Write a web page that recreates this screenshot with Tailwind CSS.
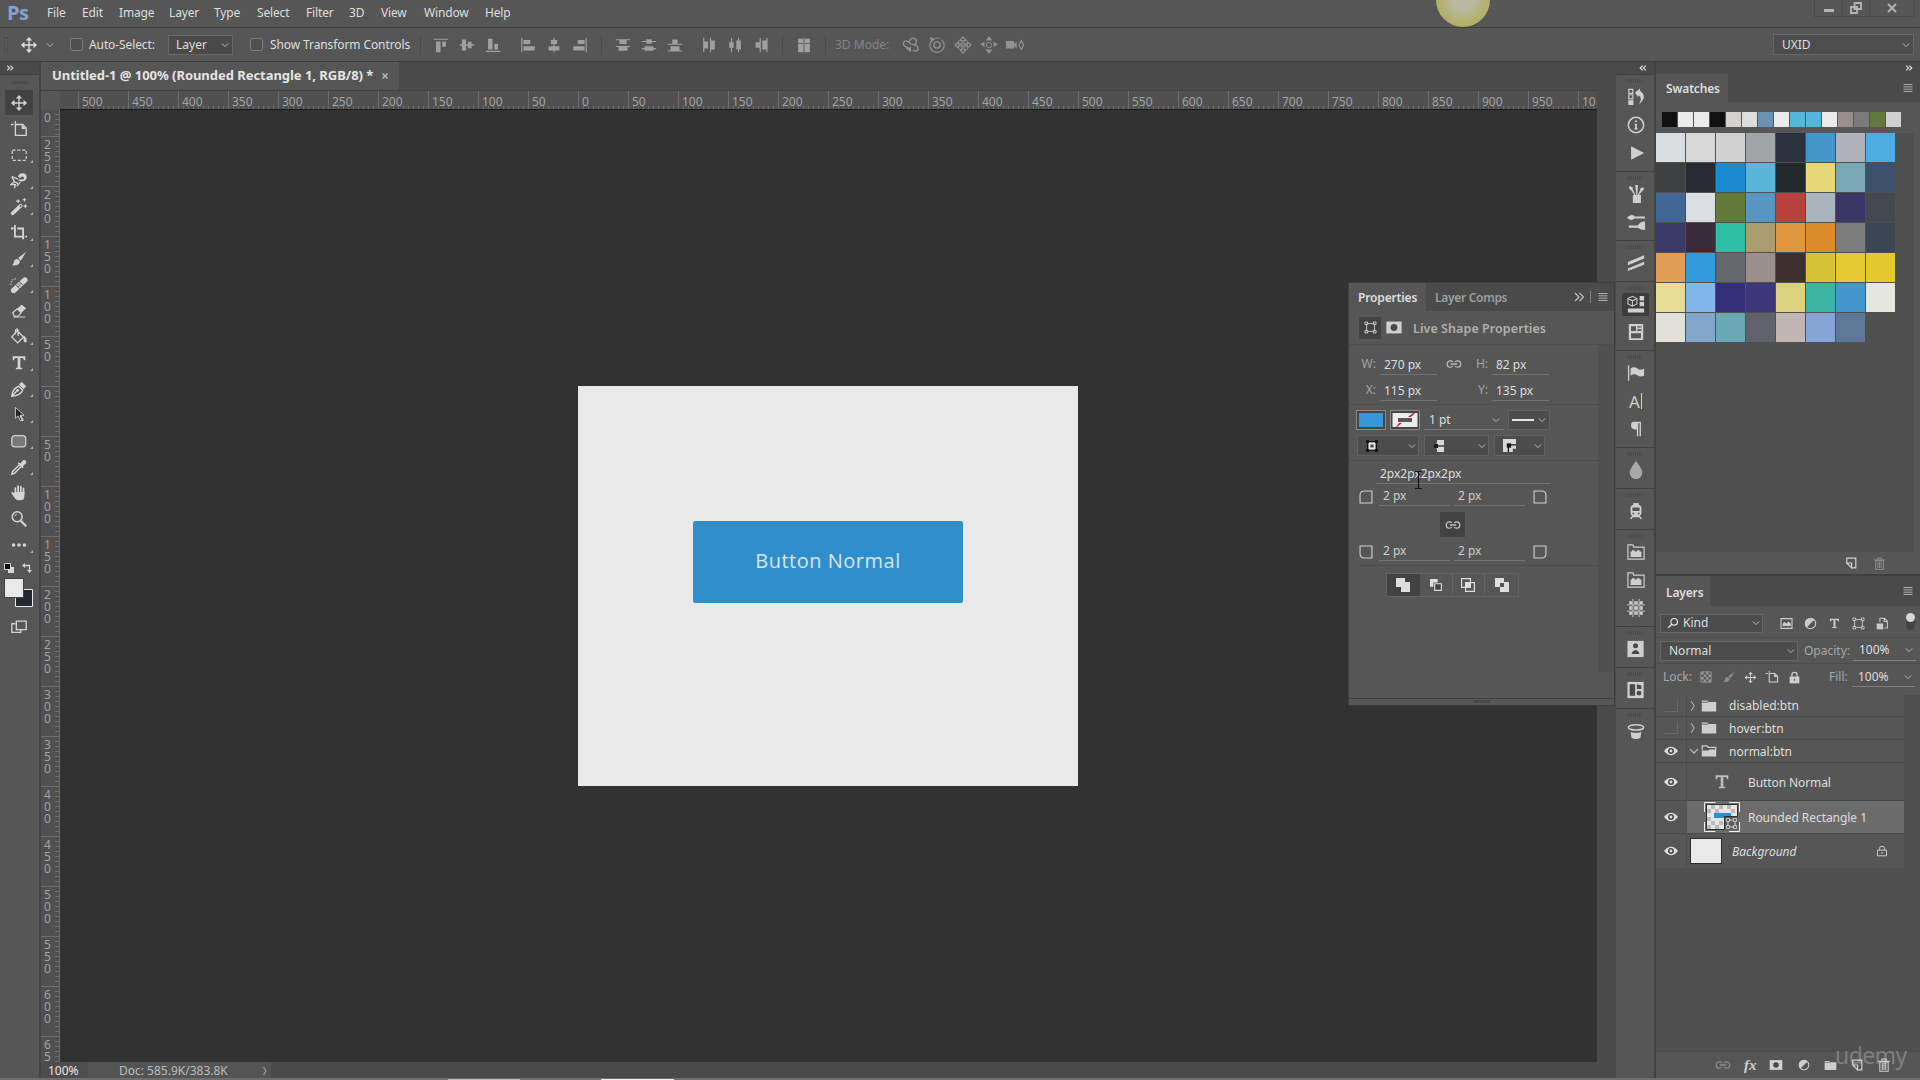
<!DOCTYPE html>
<html lang="en">
  <head>
    <meta charset="utf-8" />
    <meta content="width=device-width, initial-scale=1.0" name="viewport" />
    <title>Untitled-1 @ 100%</title>
    <script src="https://cdn.jsdelivr.net/npm/@tailwindcss/browser@4"></script>
  </head>
  <body class="bg-[#565656] font-['Noto_Sans','Open_Sans',sans-serif] text-xs text-[#dedede]">
    <!-- icon set, 20x20 grid -->
    <svg class="hidden">
      <symbol id="move" viewBox="0 0 20 20"><path d="M10 4v12M4 10h12" stroke="currentColor" stroke-width="1.5"/><path d="M10 1l3.500 4h-7zM10 19l3.500-4h-7zM1 10l4-3.500v7zM19 10l-4-3.500v7z" fill="currentColor"/></symbol>
      <symbol id="artboard" viewBox="0 0 20 20"><path d="M6 1v3M1 5h3M6 5h8l4 4v8H6z" fill="none" stroke="currentColor" stroke-width="1.500"/><path d="M13 5v5h5z" fill="currentColor"/></symbol>
      <symbol id="marquee" viewBox="0 0 20 20"><path d="M2.500 4.500h15.500v11.500H2.500z" fill="none" stroke="currentColor" stroke-width="1.300" stroke-dasharray="3.500 2"/></symbol>
      <symbol id="lasso" viewBox="0 0 20 20"><path d="M2 5l7 3M2 5l3 6-4 3 5 0-1 4M5 11l4 2" fill="none" stroke="currentColor" stroke-width="1.500"/><path d="M9 5q1-4 6-3.500 4 1 3.500 5T12 10.500L9 9.500l2-1.500q4 1 4.500-1T13 5l-2 2zM12 11q-1 3-4 5l-1-1q3-2 3.500-4z" fill="currentColor"/></symbol>
      <symbol id="wand" viewBox="0 0 20 20"><path d="M3 17L12 8.500" stroke="currentColor" stroke-width="4" stroke-linecap="round"/><path d="M11 9.500l1.500-1.500" stroke="#565656" stroke-width="1.500"/><path d="M9 1.500v4M7 3.500h4M16 0v4M14 2h4M17 7v4M15 9h4" stroke="currentColor" stroke-width="1.200"/></symbol>
      <symbol id="crop" viewBox="0 0 20 20"><path d="M5.500 1v13H16M1 5h3M8 5h6.500v12M17 14h2" fill="none" stroke="currentColor" stroke-width="2"/></symbol>
      <symbol id="brush" viewBox="0 0 20 20"><path d="M18 2l-9 7 3 3zM8 10q3 1 3 3.500Q9 18 2 17q2-1 2.500-4T8 10z" fill="currentColor"/></symbol>
      <symbol id="heal" viewBox="0 0 20 20"><path d="M1 10q0-7 7-7" stroke="currentColor" stroke-width="1.300" stroke-dasharray="1.300 1.500" fill="none"/><path d="M4 16L16.500 4.500" stroke="currentColor" stroke-width="6" stroke-linecap="round"/><path d="M6 9.500l5.500 5.500M10 5.500l5 5.500" stroke="#565656"/><path d="M9 9h.1M11 9h.1M9 11.500h.1M11 11h.1" stroke="#565656" stroke-width="1.400" stroke-linecap="round"/></symbol>
      <symbol id="eraser" viewBox="0 0 20 20"><path d="M3 12l5-4.500 4.500 4.500-4 4H5z" fill="none" stroke="currentColor" stroke-width="1.300"/><path d="M8 7.500L13 3l5 4-5.500 5zM4 16h13v1.200H4z" fill="currentColor"/></symbol>
      <symbol id="bucket" viewBox="0 0 20 20"><path d="M8 3l7 7-6.500 6.500L2 10zM6 7V2.500q2-3 3 0V9" fill="none" stroke="currentColor" stroke-width="1.400"/><path d="M15 8q5 4 3 8-3 0-3-3z" fill="currentColor"/></symbol>
      <symbol id="type" viewBox="0 0 20 20"><path d="M3 2.500h14v4.500h-1.500q-.2-2.500-2-2.500h-2v10q0 1 2 1V17h-7v-1.500q2 0 2-1v-10h-2Q4.700 4.500 4.500 7H3z" fill="currentColor"/></symbol>
      <symbol id="pen" viewBox="0 0 20 20"><path d="M2 18q1-9 8-11l4 4q-2 6-12 7zM2.500 17.500L8 12" fill="none" stroke="currentColor" stroke-width="1.600"/><circle cx="8.500" cy="11.500" r="1.500" fill="currentColor"/><path d="M10 5l3-3 5 5-3 3z" fill="currentColor"/></symbol>
      <symbol id="select" viewBox="0 0 20 20"><path d="M6 1.500v12l3-2.500 2.500 5.500 2.500-1.200-2.500-5h4z" fill="#222" stroke="currentColor"/><path d="M11.500 10.500l3 6" stroke="currentColor" stroke-width="2"/></symbol>
      <symbol id="rrect" viewBox="0 0 20 20"><rect x="2" y="4" width="15.500" height="12.500" rx="3.500" fill="#787878" stroke="currentColor" stroke-width="1.400"/></symbol>
      <symbol id="dropper" viewBox="0 0 20 20"><path d="M11 7l-8 8-1 3 3-1 8-8" fill="none" stroke="currentColor" stroke-width="1.600"/><path d="M8.500 6l5.500 5.500 1.300-1.300-1-1L18 5.500q.5-3-3-3.500l-3.500 4-1.700-1.300z" fill="currentColor"/></symbol>
      <symbol id="hand" viewBox="0 0 20 20"><path d="M6 11V4.500M9 10V2.500M12 10V3M15 11V5M7 13l-4.500-3" stroke="currentColor" stroke-width="2" stroke-linecap="round"/><path d="M5 9h11v4q0 5-4 5H9q-3 0-7-7.500l3 1z" fill="currentColor"/></symbol>
      <symbol id="zoom" viewBox="0 0 20 20"><circle cx="8" cy="7.500" r="5.500" fill="none" stroke="currentColor" stroke-width="1.700"/><path d="M12 12l6 6" stroke="currentColor" stroke-width="2.400"/><path d="M5 7q.5-2.500 3-2.500" stroke="currentColor" fill="none"/></symbol>
      <symbol id="dots" viewBox="0 0 20 20"><g fill="currentColor"><circle cx="4" cy="10" r="2"/><circle cx="10" cy="10" r="2"/><circle cx="16" cy="10" r="2"/></g></symbol>
      <symbol id="screen" viewBox="0 0 20 20"><path d="M6 7.500H2V17h10v-3" fill="none" stroke="currentColor" stroke-width="1.500"/><path d="M7 4.500h11V14H7z" fill="#565656" stroke="currentColor" stroke-width="1.500"/></symbol>
      <symbol id="chev" viewBox="0 0 20 20"><path d="M2 6l8 8 8-8" fill="none" stroke="currentColor" stroke-width="2.500"/></symbol>
      <symbol id="chevr" viewBox="0 0 20 20"><path d="M7 2l5 8-5 8" fill="none" stroke="currentColor" stroke-width="1.700"/></symbol>
      <symbol id="burger" viewBox="0 0 20 20"><path d="M1 3h18M1 7.700h18M1 12.400h18M1 17h18" stroke="currentColor" stroke-width="2"/></symbol>
      <symbol id="dblr" viewBox="0 0 20 20"><path d="M3 4l6 6-6 6M11 4l6 6-6 6" fill="none" stroke="currentColor" stroke-width="3"/></symbol>
      <symbol id="dbll" viewBox="0 0 20 20"><path d="M9 4l-6 6 6 6M17 4l-6 6 6 6" fill="none" stroke="currentColor" stroke-width="3"/></symbol>
      <symbol id="atop" viewBox="0 0 20 20"><path d="M2 3h16v1.300H2zM4.500 6h5v12h-5zM11.500 6h4v6h-4z" fill="currentColor"/></symbol>
      <symbol id="amid" viewBox="0 0 20 20"><path d="M2 9.300h16v1.500H2zM4.500 4h4.500v12H4.500zM11 6.500h4v7h-4z" fill="currentColor"/></symbol>
      <symbol id="abot" viewBox="0 0 20 20"><path d="M2 16.500h16v1.300H2zM4.500 3h5v12h-5zM11.500 8.500h4v6.500h-4z" fill="currentColor"/></symbol>
      <symbol id="aleft" viewBox="0 0 20 20"><path d="M2.500 2h1.300v16H2.500zM5 4.500h7.500v4.500H5zM5 11.500h12.500V16H5z" fill="currentColor"/></symbol>
      <symbol id="acen" viewBox="0 0 20 20"><path d="M9.300 2h1.400v16H9.300zM6.500 4.500h7v4.500h-7zM4 11.500h12V16H4z" fill="currentColor"/></symbol>
      <symbol id="aright" viewBox="0 0 20 20"><path d="M16.200 2h1.300v16h-1.300zM7.500 4.500H15v4.500H7.500zM2.500 11.500H15V16H2.500z" fill="currentColor"/></symbol>
      <symbol id="dtop" viewBox="0 0 20 20"><path d="M2 3.500h16v1.300H2zM6 4.800h8V9H6zM2 11h16v1.300H2zM5 12h10v4.500H5z" fill="currentColor"/></symbol>
      <symbol id="dmid" viewBox="0 0 20 20"><path d="M2 5.500h16v1.300H2zM7 3.500h6v5H7zM2 13.300h16v1.300H2zM5 11.500h10v5H5z" fill="currentColor"/></symbol>
      <symbol id="dbot" viewBox="0 0 20 20"><path d="M2 8.500h16v1.300H2zM7 4h6v5H7zM2 16h16v1.300H2zM5 11.500h10v5H5z" fill="currentColor"/></symbol>
      <symbol id="autoal" viewBox="0 0 20 20"><path d="M3.500 3h5.500v5H3.500zM3.500 9h5.500v9H3.500zM11 3h5.500v5H11zM11 9h5.500v9H11zM9.500 2h1v16h-1z" fill="currentColor"/></symbol>
      <symbol id="orbit" viewBox="0 0 20 20"><path d="M7 13q-7-2-5-6t8 2q8 1 8 5t-6 2M8 6q2-5 6-3t0 7" fill="none" stroke="currentColor" stroke-width="1.500"/><path d="M4 14l6-2v6z" fill="currentColor"/></symbol>
      <symbol id="roll" viewBox="0 0 20 20"><circle cx="10" cy="10" r="3.500" fill="none" stroke="currentColor" stroke-width="1.500"/><path d="M5 4a8 8 0 1 0 10 0M8 2.500h5" fill="none" stroke="currentColor" stroke-width="1.300"/><path d="M2 1l6 2-4 4z" fill="currentColor"/></symbol>
      <symbol id="pan3" viewBox="0 0 20 20"><path d="M9 9V5H6.500L10 1l3.500 4H11v4h4V6.500L19 10l-4 3.500V11h-4v4h2.500L10 19l-3.500-4H9v-4H5v2.500L1 10l4-3.500V9z" fill="none" stroke="currentColor" stroke-width="1.300"/></symbol>
      <symbol id="slide3" viewBox="0 0 20 20"><circle cx="10" cy="10" r="3" fill="none" stroke="currentColor"/><path d="M10 0l3.500 5h-7zM10 20l4-5H6zM0 9l5-2.500v6zM20 9l-5-2.500v6z" fill="currentColor"/></symbol>
      <symbol id="cam3" viewBox="0 0 20 20"><path d="M0 5.500h9V9l3-3v8l-3-3v3H0z" fill="currentColor"/><path d="M17 5l2.500 5-2.500 5-2.500-5z" fill="none" stroke="currentColor" stroke-width="1.300"/></symbol>
      <symbol id="history" viewBox="0 0 20 20"><path d="M2 1.500h4.500v4.500H2zM2 7.500h4.500V12H2z" fill="none" stroke="currentColor" stroke-width="1.300"/><path d="M1.400 13.500h5.800v5.500H1.400zM9 5l5.500-4.500V3q9 7-1 15 4-7-.5-10l-1 2z" fill="currentColor"/></symbol>
      <symbol id="info" viewBox="0 0 20 20"><circle cx="10" cy="10" r="8.500" fill="none" stroke="currentColor" stroke-width="1.700"/><path d="M9 5h2v2H9zM8 8.500h3V14h1v1H8v-1h1V9.500H8z" fill="currentColor"/></symbol>
      <symbol id="play" viewBox="0 0 20 20"><path d="M4.500 2.500L19 10 4.500 17.500z" fill="currentColor"/></symbol>
      <symbol id="brushes" viewBox="0 0 20 20"><path d="M6.500 11h9v9h-9zM2.500 1.500q4.500 0 4 3.500l3 6H8L5 6Q1.500 5 2.500 1.500zM9 0h3v4l-.5 7h-1L9.500 4zM19 3q-4.500-1-4.500 3L12 11h1.500l3-4q2.500-1 2.500-4z" fill="currentColor"/></symbol>
      <symbol id="bset" viewBox="0 0 20 20"><path d="M0 5q5-5 8.500-1.200H20v2.400H8.500Q4 10 0 5zM2 14h10q3-5 8-4.500v9.500q-5 0-8-2.700H2z" fill="currentColor"/></symbol>
      <symbol id="slashes" viewBox="0 0 20 20"><path d="M1 9L19 1.500v3.500L1 12.500zM1 16L19 8.500V12L1 19z" fill="currentColor"/></symbol>
      <symbol id="cube" viewBox="0 0 20 20"><path d="M1 4l5-2.500L11 4v6l-5 2.500L1 10zM1 4l5 2.500L11 4M6 6.500v6" fill="none" stroke="currentColor" stroke-width="1.200"/><path d="M14 1h5v5h-5zM14 7.500h5v5h-5zM1 15h18v4.500H1z" fill="currentColor"/></symbol>
      <symbol id="news" viewBox="0 0 20 20"><path d="M2 1h16v18H2zM4.500 3.500v5.500H10V3.500zm7 0v1.500h4.500V3.500zm0 3.500v2h4.500V7zM4.500 11.500v5.500h11v-5.500z" fill="currentColor" fill-rule="evenodd"/></symbol>
      <symbol id="flag" viewBox="0 0 20 20"><path d="M1 1.500h1.500v17H1zM4 5q4-3 7.500 0T19 5v8q-4 2-7.500-.5T4 13z" fill="currentColor"/></symbol>
      <symbol id="para" viewBox="0 0 20 20"><path d="M8 2h7.500v16H14V3.500h-1.500V18H11v-7.500q-6.500.5-6.500-4.500T8 2z" fill="currentColor"/></symbol>
      <symbol id="drop" viewBox="0 0 20 20"><path d="M10 0q7 9 7 13a7 7 0 0 1-14 0Q3 9 10 0z" fill="#a9a9a9"/></symbol>
      <symbol id="train" viewBox="0 0 20 20"><path d="M7 1h6v2q3 .5 3 3v7q0 2-2 2l3 4h-2l-1.500-2h-7L5 19H3l3-4q-2 0-2-2V6q0-2.500 3-3zM6 6v4h8V6zm0 6v1.500h2V12zm6 0v1.500h2V12z" fill="currentColor" fill-rule="evenodd"/></symbol>
      <symbol id="lego" viewBox="0 0 20 20"><path d="M1 18V2h5.500l1 2.500H19V18z" fill="none" stroke="currentColor" stroke-width="1.300"/><path d="M4 15.500V9.500h1.500V8h3v1.500H11V8h3v1.500h2v6z" fill="currentColor"/></symbol>
      <symbol id="grid" viewBox="0 0 20 20"><path d="M6.500 0v20M13.500 0v20M0 6.500h20M0 13.500h20" stroke="currentColor" stroke-width="1"/><path d="M2.500 2.500h3v3h-3zM8 2.500h4v3H8zM14.500 2.500h3v3h-3zM2.500 8h3v4h-3zM8 8h4v4H8zM14.500 8h3v4h-3zM2.500 14.500h3v3h-3zM8 14.500h4v3H8zM14.500 14.500h3v3h-3z" fill="currentColor"/></symbol>
      <symbol id="person" viewBox="0 0 20 20"><path d="M.5 1h18v18H.5z" fill="currentColor"/><circle cx="9.500" cy="6.500" r="2.800" fill="#4a4a4a"/><path d="M5 15.500q1-4 4.500-4.500 3.500.500 4.500 4.500z" fill="#4a4a4a"/></symbol>
      <symbol id="panels" viewBox="0 0 20 20"><path d="M.5 1h18v18H.5z" fill="currentColor"/><path d="M3 3.500h6v13H3zM11 3.500l5 1.500v4h-5z" fill="#4a4a4a"/><circle cx="13.300" cy="13.500" r="2.600" fill="#4a4a4a"/></symbol>
      <symbol id="hat" viewBox="0 0 20 20"><ellipse cx="10" cy="6" rx="8.500" ry="3" fill="none" stroke="currentColor" stroke-width="1.700"/><path d="M4 11q6 2 12 0l-1 6.500q-5 3-10 0z" fill="currentColor"/></symbol>
      <symbol id="newl" viewBox="0 0 20 20"><path d="M3 10V2h15v16h-7" fill="none" stroke="currentColor" stroke-width="2"/><path d="M3 10h8v8z" fill="none" stroke="currentColor" stroke-width="2"/></symbol>
      <symbol id="trash" viewBox="0 0 20 20"><path d="M4 5.500h12V19H4zM1.500 4.500h17M7 4V1.500h6V4M7.500 7v10M10 7v10M12.500 7v10" fill="none" stroke="currentColor" stroke-width="1.500"/></symbol>
      <symbol id="loupe" viewBox="0 0 20 20"><circle cx="12" cy="8" r="5.500" fill="none" stroke="currentColor" stroke-width="2"/><path d="M8 12l-6 6" stroke="currentColor" stroke-width="2.500"/></symbol>
      <symbol id="image" viewBox="0 0 20 20"><path d="M1.500 2.500h17v15h-17z" fill="none" stroke="currentColor" stroke-width="1.700"/><path d="M4 14V10l3-2.500L10 10l3-3 3.500 3v4z" fill="currentColor"/></symbol>
      <symbol id="half" viewBox="0 0 20 20"><circle cx="10" cy="10" r="8" fill="none" stroke="currentColor" stroke-width="1.700"/><path d="M4 16A8.400 8.400 0 0 1 16 4z" fill="currentColor"/></symbol>
      <symbol id="shape" viewBox="0 0 20 20"><path d="M4 4h12v12H4z" fill="none" stroke="currentColor" stroke-width="1.400"/><path d="M1.500 1.500h4v4h-4zM14.500 1.500h4v4h-4zM1.500 14.500h4v4h-4zM14.500 14.500h4v4h-4z" fill="#565656" stroke="currentColor" stroke-width="1.400"/></symbol>
      <symbol id="smart" viewBox="0 0 20 20"><path d="M6 8V2h7l4.500 4.500V17H13M12.500 2v5h5" fill="none" stroke="currentColor" stroke-width="1.600"/><path d="M1 10h10v9H1z" fill="currentColor"/></symbol>
      <symbol id="checker" viewBox="0 0 20 20"><path d="M1.500 1.500h17v17h-17z" fill="none" stroke="currentColor" stroke-width="1.500"/><path d="M2 2h4v4H2zM10 2h4v4h-4zM6 6h4v4H6zM14 6h4v4h-4zM2 10h4v4H2zM10 10h4v4h-4zM6 14h4v4H6zM14 14h4v4h-4z" fill="currentColor"/></symbol>
      <symbol id="lock" viewBox="0 0 20 20"><path d="M6 9V6q0-4 4-4t4 4v3" fill="none" stroke="currentColor" stroke-width="2"/><path d="M2.500 8.500h15V19h-15z" fill="currentColor"/><path d="M9 12h2v3H9z" fill="#565656"/></symbol>
      <symbol id="locko" viewBox="0 0 20 20"><path d="M6 8V5.500Q6 2 10 2t4 3.500V8M2.500 8.500h15V18h-15z" fill="none" stroke="currentColor" stroke-width="1.600"/><path d="M9 11.500h2v3H9z" fill="currentColor"/></symbol>
      <symbol id="folder" viewBox="0 0 20 20"><path d="M1 3h7l1.500 2H19v12H1z" fill="currentColor"/><path d="M1 5.200h8" stroke="#565656"/></symbol>
      <symbol id="foldero" viewBox="0 0 20 20"><path d="M1.500 9V3.500h6L9 5.500h9.500v3" fill="none" stroke="currentColor" stroke-width="1.500"/><path d="M1 9.500h8l1.500-1.500H19v9H1z" fill="currentColor"/></symbol>
      <symbol id="eye" viewBox="0 0 20 20"><path d="M0 10q10-12 20 0-10 12-20 0z" fill="currentColor"/><circle cx="10" cy="10" r="4.300" fill="#4a4a4a"/><circle cx="10" cy="10" r="2" fill="currentColor"/></symbol>
      <symbol id="link" viewBox="0 0 20 20"><path d="M8.500 7.500Q7.500 6 5.500 6a4 4 0 0 0 0 8q2 0 3-1.500M11.500 7.500Q12.500 6 14.500 6a4 4 0 0 1 0 8q-2 0-3-1.500M6 10h8" fill="none" stroke="currentColor" stroke-width="1.600"/></symbol>
      <symbol id="mask" viewBox="0 0 20 20"><path d="M1 3h18v14H1z" fill="currentColor"/><circle cx="10" cy="10" r="4" fill="#4a4a4a"/></symbol>
      <symbol id="corner" viewBox="0 0 20 20"><path d="M1.500 18.500V7.500q0-6 6-6h11v17z" fill="none" stroke="currentColor" stroke-width="1.600"/></symbol>
    </svg>

    <div class="relative flex h-[1080px] w-[1920px] flex-col overflow-hidden">
      <!-- menu bar -->
      <header class="flex h-7 shrink-0 items-center border-b border-[#404040] pb-0.5 pl-[7px]">
        <span class="w-10 font-['Open_Sans'] text-[20px] leading-none font-bold tracking-tight text-[#85a5cd]">Ps</span>
        <nav class="flex text-[12px] tracking-[-0.15px]">
          <span class="w-[35px]">File</span>
          <span class="w-[37px]">Edit</span>
          <span class="w-[50px]">Image</span>
          <span class="w-[45px]">Layer</span>
          <span class="w-[43px]">Type</span>
          <span class="w-[49px]">Select</span>
          <span class="w-[43px]">Filter</span>
          <span class="w-8">3D</span>
          <span class="w-[43px]">View</span>
          <span class="w-[61px]">Window</span>
          <span>Help</span>
        </nav>
        <div class="ml-auto flex h-[17px] self-start text-[#b4b4b4]">
          <div class="flex w-[29px] items-end justify-center border-x border-b border-[#4b4b4b] pb-1"><i class="h-[3px] w-2.5 bg-[#b4b4b4]"></i></div>
          <div class="flex w-[27px] items-center justify-center border-r border-b border-[#4b4b4b]"><svg class="h-3 w-3" viewBox="0 0 12 12"><path d="M4.500 1h6.500v6H4.500zM1 5h6v6H1z" fill="none" stroke="currentColor" stroke-width="1.800"/></svg></div>
          <div class="mr-[5px] flex w-[45px] items-center justify-center border-r border-b border-[#4b4b4b]"><svg class="h-2.5 w-2.5" viewBox="0 0 10 10"><path d="M1 1l8 8M9 1L1 9" stroke="currentColor" stroke-width="2"/></svg></div>
        </div>
      </header>

      <!-- options bar -->
      <div class="flex h-[34px] shrink-0 items-center border-b border-[#404040] text-[#dedede]">
        <i class="ml-1 h-4 w-1 border-x border-dotted border-[#444]"></i>
        <svg class="ml-3 h-[18px] w-[18px]"><use href="#move"/></svg>
        <svg class="ml-2 h-2 w-2 text-[#b5b5b5]"><use href="#chev"/></svg>
        <i class="ml-4 h-[13px] w-[13px] rounded-xs border border-[#7c7c7c] bg-[#505050]"></i>
        <span class="ml-1.5 w-[79px] tracking-[-0.1px]">Auto-Select:</span>
        <div class="flex h-5 w-[65px] items-center justify-between border border-[#696969] bg-[#4a4a4a] pr-[3px] pl-[7px]"><span>Layer</span><svg class="h-2 w-2 text-[#b5b5b5]"><use href="#chev"/></svg></div>
        <i class="ml-[17px] h-[13px] w-[13px] rounded-xs border border-[#7c7c7c] bg-[#505050]"></i>
        <span class="ml-[7px] w-[140px] tracking-[-0.1px] whitespace-nowrap">Show Transform Controls</span>
        <i class="ml-[10px] h-5 w-px bg-[#4a4a4a]"></i>
        <div class="ml-[11px] flex gap-2 text-[#a0a0a0]">
          <svg class="h-[18px] w-[18px]"><use href="#atop"/></svg>
          <svg class="h-[18px] w-[18px]"><use href="#amid"/></svg>
          <svg class="h-[18px] w-[18px]"><use href="#abot"/></svg>
          <svg class="ml-[9px] h-[18px] w-[18px]"><use href="#aleft"/></svg>
          <svg class="h-[18px] w-[18px]"><use href="#acen"/></svg>
          <svg class="h-[18px] w-[18px]"><use href="#aright"/></svg>
        </div>
        <i class="ml-3 h-5 w-px bg-[#4a4a4a]"></i>
        <div class="ml-3 flex gap-2 text-[#a0a0a0]">
          <svg class="h-[18px] w-[18px]"><use href="#dtop"/></svg>
          <svg class="h-[18px] w-[18px]"><use href="#dmid"/></svg>
          <svg class="h-[18px] w-[18px]"><use href="#dbot"/></svg>
          <svg class="ml-2 h-[18px] w-[18px] -rotate-90"><use href="#dtop"/></svg>
          <svg class="h-[18px] w-[18px] -rotate-90"><use href="#dmid"/></svg>
          <svg class="h-[18px] w-[18px] -rotate-90"><use href="#dbot"/></svg>
        </div>
        <i class="ml-3 h-5 w-px bg-[#4a4a4a]"></i>
        <svg class="ml-3 h-[18px] w-[18px] text-[#a0a0a0]"><use href="#autoal"/></svg>
        <i class="ml-3 h-5 w-px bg-[#4a4a4a]"></i>
        <span class="ml-[9px] w-[67px] whitespace-nowrap text-[#858585]">3D Mode:</span>
        <div class="flex gap-2 text-[#929292]">
          <svg class="h-[18px] w-[18px]"><use href="#orbit"/></svg>
          <svg class="h-[18px] w-[18px]"><use href="#roll"/></svg>
          <svg class="h-[18px] w-[18px]"><use href="#pan3"/></svg>
          <svg class="h-[18px] w-[18px]"><use href="#slide3"/></svg>
          <svg class="h-[18px] w-[18px]"><use href="#cam3"/></svg>
        </div>
        <div class="mr-[6px] ml-auto flex h-[21px] w-[141px] items-center justify-between border border-[#666] bg-[#4d4d4d] pr-[3px] pl-2"><span>UXID</span><svg class="h-2 w-2 text-[#b5b5b5]"><use href="#chev"/></svg></div>
      </div>

      <main class="flex h-[1016px] shrink-0">
        <!-- tools -->
        <aside class="flex w-[41px] flex-col border-r-2 border-[#444] bg-[#565656] text-[#d4d4d4]">
          <div class="flex h-3 items-center bg-[#4a4a4a] pl-1.5"><svg class="h-2 w-2"><use href="#dblr"/></svg></div>
          <div class="flex h-[15px] items-start justify-center border-t border-[#404040] pt-1.5"><i class="h-[3px] w-4 bg-[#4b4b4b]"></i></div>
          <div id="tools" class="flex flex-col"></div>
          <div class="mt-px flex h-[19px] items-center gap-2 pl-1">
            <svg class="h-2.5 w-2.5" viewBox="0 0 10 10"><path d="M4 4h6v6H4z" fill="#d4d4d4"/><path d="M.5.5h6v6h-6z" fill="#111" stroke="#d4d4d4"/></svg>
            <svg class="h-2.5 w-2.5" viewBox="0 0 10 10"><path d="M2 2.500h5.500V8" fill="none" stroke="currentColor" stroke-width="1.300"/><path d="M0 2.500L3 0v5zM7.500 10L5 7h5z" fill="currentColor"/></svg>
          </div>
          <svg class="mt-px ml-1 h-[30px] w-[30px]" viewBox="0 0 30 30"><path d="M11.500 11.500h17v17h-17z" fill="#24262c" stroke="#e8e8e8"/><path d="M0 0h20v20H0z" fill="#444"/><path d="M1 1h18v18H1z" fill="#e8e8e8"/></svg>
          <svg class="mt-[9px] ml-[10px] h-[18px] w-[18px]"><use href="#screen"/></svg>
        </aside>

        <!-- document window -->
        <section class="flex w-[1575px] flex-col bg-[#4a4a4a]">
          <div class="flex h-7 shrink-0">
            <div class="flex w-[358px] items-center bg-[#565656] pl-[11px]">
              <span class="w-[330px] text-[13px] font-bold tracking-[-0.04px] whitespace-nowrap text-[#e4e4e4]">Untitled-1 @ 100% (Rounded Rectangle 1, RGB/8) *</span>
              <svg class="h-1.5 w-1.5 text-[#b8b8b8]" viewBox="0 0 6 6"><path d="M.5.5l5 5M5.500.5l-5 5" stroke="currentColor" stroke-width="1.500"/></svg>
            </div>
          </div>
          <div class="flex h-5 w-[1556px] shrink-0 border-t border-[#414141] bg-[#505050]">
            <div class="w-[19px] shrink-0 bg-[#565656]"></div>
            <div class="flex-1 overflow-hidden border-b border-[#1c1c1c]"><div id="hruler" class="flex text-[12px] leading-[21px] text-[#a2a2a2]"></div></div>
          </div>
          <div class="flex h-[952px] shrink-0">
            <div class="w-[19px] shrink-0 overflow-hidden bg-[#505050]"><div id="vruler" class="text-[12px] leading-3 text-[#a2a2a2]"></div></div>
            <div class="w-[1537px] bg-[#323232] pt-[276px] pl-[518px]">
              <div class="flex h-[400px] w-[500px] items-start justify-center bg-[#e9e9e9] pt-[135px]">
                <div class="flex h-[82px] w-[270px] items-center justify-center rounded-xs bg-[#308eca] pb-0.5 font-['Open_Sans'] text-[20px] tracking-[0.5px] text-[#d9e6f0]"><span class="whitespace-nowrap">Button Normal</span></div>
              </div>
            </div>
          </div>
          <div class="flex h-4 items-center text-[#bdbdbd]">
            <div class="flex h-4 w-[47px] items-center bg-[#4d4d4d] pt-px pl-[7px] text-[#e6e6e6]">100%</div>
            <div class="flex h-4 w-[183px] items-center justify-between bg-[#545454] pt-px pr-px pl-[31px]"><span>Doc: 585.9K/383.8K</span><svg class="h-2.5 w-2.5"><use href="#chevr"/></svg></div>
          </div>
        </section>

        <!-- collapsed panel icons -->
        <aside class="flex w-10 flex-col border-r-2 border-[#424242] bg-[#565656]">
          <div class="flex h-3 shrink-0 items-center justify-end bg-[#4a4a4a] pr-[7px]"><svg class="h-2 w-2"><use href="#dbll"/></svg></div>
          <div id="dock" class="text-[#cfcfcf]"></div>
        </aside>

        <!-- right panels -->
        <aside class="flex w-[264px] flex-col">
          <div class="flex h-3 shrink-0 items-center justify-end bg-[#4a4a4a] pr-[7px]"><svg class="h-2 w-2"><use href="#dblr"/></svg></div>
          <div class="flex h-7 shrink-0 items-center bg-[#4a4a4a]">
            <div class="flex h-7 w-[72px] items-center bg-[#565656] pt-0.5 pl-2.5 font-semibold tracking-[-0.15px]">Swatches</div>
            <svg class="mr-[7px] ml-auto h-2.5 w-2.5 text-[#b0b0b0]"><use href="#burger"/></svg>
          </div>
          <div id="recent" class="flex h-[31px] shrink-0 gap-px pt-2.5 pl-1.5"></div>
          <div class="h-[419px] w-[258px] shrink-0 bg-[#505050]"><div id="swatches" class="grid w-[240px] grid-cols-8 gap-y-px"></div></div>
          <div class="flex h-6 shrink-0 items-center border-b-2 border-[#404040] pl-[189px] text-[#d0d0d0]">
            <svg class="h-3 w-3"><use href="#newl"/></svg>
            <svg class="ml-4 h-[13px] w-[13px] text-[#8d8d8d]"><use href="#trash"/></svg>
          </div>
          <div class="flex h-[30px] shrink-0 items-center bg-[#4a4a4a]">
            <div class="flex h-[30px] w-[54px] items-center bg-[#565656] pt-1 pl-2.5 font-semibold tracking-[-0.15px]">Layers</div>
            <svg class="mr-[7px] ml-auto h-2.5 w-2.5 text-[#b0b0b0]"><use href="#burger"/></svg>
          </div>
          <div class="flex h-8 shrink-0 items-center border-b border-[#4c4c4c] pt-[3px] pl-1">
            <div class="flex h-[19px] w-[103px] items-center border border-[#666] bg-[#4c4c4c] pl-1.5"><svg class="h-3 w-3"><use href="#loupe"/></svg><span class="ml-1 w-[69px]">Kind</span><svg class="h-2 w-2 shrink-0 text-[#b5b5b5]"><use href="#chev"/></svg></div>
            <div class="ml-[17px] flex gap-[11px] text-[#cacaca]">
              <svg class="h-[13px] w-[13px]"><use href="#image"/></svg>
              <svg class="h-[13px] w-[13px]"><use href="#half"/></svg>
              <svg class="h-[13px] w-[13px]"><use href="#type"/></svg>
              <svg class="h-[13px] w-[13px]"><use href="#shape"/></svg>
              <svg class="h-[13px] w-[13px]"><use href="#smart"/></svg>
            </div>
            <div class="mb-1 ml-[17px] h-[17px] w-[9px] rounded-full bg-[#444]"><i class="block h-[9px] w-[9px] rounded-full bg-[#d8d8d8]"></i></div>
          </div>
          <div class="flex h-[26px] shrink-0 items-center border-b border-[#4c4c4c] pl-1">
            <div class="flex h-5 w-[138px] items-center justify-between border border-[#666] bg-[#4c4c4c] pr-0.5 pl-2"><span>Normal</span><svg class="h-2 w-2 text-[#b5b5b5]"><use href="#chev"/></svg></div>
            <span class="ml-1.5 w-[49px] text-[#a8a8a8]">Opacity:</span>
            <div class="flex h-5 w-[63px] items-center justify-between border-b border-[#808080] pr-[3px] pl-1.5"><span>100%</span><svg class="h-2 w-2 text-[#b5b5b5]"><use href="#chev"/></svg></div>
          </div>
          <div class="flex h-[31px] shrink-0 items-center pb-[5px] pl-[7px] text-[#cfcfcf]">
            <span class="w-[37px] text-[#a8a8a8]">Lock:</span>
            <svg class="h-3 w-3 text-[#9a9a9a]"><use href="#checker"/></svg>
            <svg class="ml-2.5 h-3.5 w-3.5 text-[#8d8d8d]"><use href="#brush"/></svg>
            <svg class="ml-2 h-[13px] w-[13px]"><use href="#move"/></svg>
            <svg class="ml-2 h-3.5 w-3.5"><use href="#artboard"/></svg>
            <svg class="ml-[9px] h-[13px] w-[13px]"><use href="#lock"/></svg>
            <span class="ml-7 w-[23px] text-[#a8a8a8]">Fill:</span>
            <div class="flex h-5 w-[63px] items-center justify-between border-b border-[#808080] pr-[3px] pl-1.5 text-[#dedede]"><span>100%</span><svg class="h-2 w-2 text-[#b5b5b5]"><use href="#chev"/></svg></div>
          </div>

          <div class="h-[356px] shrink-0 bg-[#505050]">
            <div class="w-[248px] bg-[#565656]">
              <div class="flex h-[22px] items-center border-b border-[#484848]">
                <i class="ml-2 h-3 w-3.5 border-r border-b border-[#696969]"></i><i class="ml-2 h-full w-px bg-[#4c4c4c]"></i>
                <svg class="h-3 w-3 text-[#b5b5b5]"><use href="#chevr"/></svg><svg class="ml-0.5 h-4 w-4 text-[#cfcfcf]"><use href="#folder"/></svg>
                <span class="ml-3 pt-px">disabled:btn</span>
              </div>
              <div class="flex h-[23px] items-center border-b border-[#484848]">
                <i class="ml-2 h-3 w-3.5 border-r border-b border-[#696969]"></i><i class="ml-2 h-full w-px bg-[#4c4c4c]"></i>
                <svg class="h-3 w-3 text-[#b5b5b5]"><use href="#chevr"/></svg><svg class="ml-0.5 h-4 w-4 text-[#cfcfcf]"><use href="#folder"/></svg>
                <span class="ml-3 pt-px">hover:btn</span>
              </div>
              <div class="flex h-[23px] items-center border-b border-[#484848]">
                <svg class="ml-2 h-3.5 w-3.5"><use href="#eye"/></svg><i class="ml-2 h-full w-px bg-[#4c4c4c]"></i>
                <svg class="ml-0.5 h-2.5 w-2.5 text-[#b5b5b5]"><use href="#chev"/></svg><svg class="ml-0.5 h-4 w-4 text-[#cfcfcf]"><use href="#foldero"/></svg>
                <span class="ml-3 pt-px">normal:btn</span>
              </div>
              <div class="flex h-[38px] items-center border-b border-[#484848]">
                <svg class="ml-2 h-3.5 w-3.5"><use href="#eye"/></svg><i class="ml-2 h-full w-px bg-[#4c4c4c]"></i>
                <svg class="ml-[26px] h-[18px] w-[18px] text-[#bdbdbd]"><use href="#type"/></svg>
                <span class="ml-[17px] pt-0.5 tracking-[-0.1px]">Button Normal</span>
              </div>
              <div class="flex h-[33px] items-center border-b border-[#484848]">
                <svg class="ml-2 h-3.5 w-3.5 shrink-0"><use href="#eye"/></svg>
                <div class="ml-[9px] flex h-full flex-1 items-center bg-[#6b6b6b] pl-[17px]">
                  <svg class="h-[30px] w-9" viewBox="0 0 36 30"><path d="M2.500 2.500h31v25h-31z" fill="#e6e6e6"/><path d="M7 3h4v4H7zM15 3h4v4h-4zM23 3h4v4h-4zM3 7h4v4H3zM11 7h4v4h-4zM27 7h4v4h-4zM7 19h4v4H7zM15 19h4v4h-4zM3 23h4v4H3zM11 23h4v4h-4zM3 15h4v4H3z" fill="#b9b9b9"/><path d="M10 11h17v5H10z" fill="#308eca"/><path d="M20.500 28V14.500H34V28z" fill="#5a5a5a"/><path d="M2.500 2.500h31v12h-13v13h-18z" fill="none" stroke="#2e2e2e"/><path d="M24 18h7v7h-7z" fill="none" stroke="#ddd"/><path d="M22.500 16.500h3v3h-3zM29.500 16.500h3v3h-3zM22.500 23.500h3v3h-3zM29.500 23.500h3v3h-3z" fill="#5a5a5a" stroke="#ddd" stroke-width=".8"/><path d="M.5 10V.5h11M25 .5h10.500V10M.5 20v9.500h11M25 29.500h10.500V20" fill="none" stroke="#eee"/></svg>
                  <span class="ml-2 pt-0.5 tracking-[-0.05px]">Rounded Rectangle 1</span>
                </div>
              </div>
              <div class="flex h-[34px] items-center">
                <svg class="ml-2 h-3.5 w-3.5"><use href="#eye"/></svg><i class="ml-2 h-full w-px bg-[#4c4c4c]"></i>
                <i class="ml-[3px] h-[26px] w-8 border border-[#2e2e2e] bg-[#e9e9e9]"></i>
                <span class="ml-2.5 flex-1 pt-px italic">Background</span>
                <svg class="mr-4 h-3 w-3 text-[#cfcfcf]"><use href="#locko"/></svg>
              </div>
            </div>
          </div>
          <div class="flex flex-1 items-center border-t border-[#4c4c4c] pl-[59px] text-[#cfcfcf]">
            <svg class="h-4 w-4 text-[#8a8a8a]"><use href="#link"/></svg>
            <span class="ml-[13px] w-[25px] font-['Liberation_Serif'] text-[15px] leading-none font-bold italic">fx</span>
            <svg class="h-3.5 w-3.5"><use href="#mask"/></svg>
            <svg class="ml-[15px] h-3 w-3"><use href="#half"/></svg>
            <svg class="ml-[14px] h-[13px] w-[13px]"><use href="#folder"/></svg>
            <svg class="ml-3.5 h-3 w-3"><use href="#newl"/></svg>
            <svg class="ml-3.5 h-3.5 w-3.5"><use href="#trash"/></svg>
          </div>
        </aside>
      </main>
      <footer class="flex h-0.5 bg-[#6e6e6e]">
        <i class="mt-px ml-[448px] h-px w-[72px] bg-[#bdbdbd]"></i>
        <i class="mt-px ml-[81px] h-px w-[73px] bg-[#f0f0f0]"></i>
      </footer>

      <!-- floating properties panel -->
      <section class="absolute top-[282px] left-[1348px] flex h-[424px] w-[267px] flex-col border border-[#3f3f3f] bg-[#565656]">
        <div class="flex h-7 shrink-0 items-center bg-[#4a4a4a]">
          <div class="flex h-7 w-[77px] items-center bg-[#565656] pt-0.5 pl-[9px] font-semibold tracking-[-0.15px]">Properties</div>
          <span class="ml-[9px] pt-0.5 font-semibold tracking-[-0.3px] text-[#9e9e9e]">Layer Comps</span>
          <svg class="mr-1.5 ml-auto h-2.5 w-2.5 text-[#c4c4c4]" viewBox="0 0 10 10"><path d="M1 1l4 4-4 4M5.500 1l4 4-4 4" fill="none" stroke="currentColor" stroke-width="1.200"/></svg>
          <i class="h-3 w-px bg-[#808080]"></i>
          <svg class="mr-1.5 ml-[7px] h-2.5 w-2.5 text-[#b0b0b0]"><use href="#burger"/></svg>
        </div>
        <div class="flex h-[34px] shrink-0 items-center border-b border-[#4c4c4c] pl-2.5 text-[#cfcfcf]">
          <div class="flex h-[22px] w-[22px] items-center justify-center bg-[#424242]"><svg class="h-[13px] w-[13px]"><use href="#shape"/></svg></div>
          <svg class="ml-1 h-[17px] w-[18px]"><use href="#mask"/></svg>
          <span class="ml-2.5 pt-[3px] text-[12.5px] font-semibold tracking-[0.07px] text-[#b0b0b0]">Live Shape Properties</span>
        </div>
        <div class="flex flex-1">
          <div class="flex w-[249px] flex-col">
            <div class="mt-[9px] flex h-[21px] items-end">
              <span class="h-[19px] w-[27px] text-right text-[#a4a4a4]">W:</span><span class="ml-1 h-[19px] w-[57px] border-b border-[#727272] pl-1 leading-[18px]">270 px</span>
              <svg class="ml-[9px] mb-[3px] h-4 w-4 text-[#bdbdbd]"><use href="#link"/></svg>
              <span class="ml-[9px] h-[19px] w-[17px] text-right text-[#a4a4a4]">H:</span><span class="ml-1 h-[19px] w-[57px] border-b border-[#727272] pl-1 leading-[18px]">82 px</span>
            </div>
            <div class="mt-[7px] flex h-[19px] items-end">
              <span class="h-[19px] w-[27px] text-right text-[#a4a4a4]">X:</span><span class="ml-1 h-[19px] w-[57px] border-b border-[#727272] pl-1 leading-[18px]">115 px</span>
              <span class="ml-[34px] h-[19px] w-[17px] text-right text-[#a4a4a4]">Y:</span><span class="ml-1 h-[19px] w-[57px] border-b border-[#727272] pl-1 leading-[18px]">135 px</span>
            </div>
            <div class="mt-[3px] flex h-[26px] items-end border-t border-[#4c4c4c] pl-[7px]">
              <div class="h-5 w-[30px] border border-[#8a8a8a] bg-[#444] p-0.5"><i class="block h-full bg-[#3498d8]"></i></div>
              <svg class="ml-1 h-5 w-[30px]" viewBox="0 0 30 20"><path d="M.5.5h29v19H.5z" fill="#444" stroke="#8a8a8a"/><path d="M2.500 3h25v14h-25z" fill="#ececec"/><path d="M7 17l5-4H9l-3 4zM23 3l-5 4h3l4-4z" fill="#b02848"/><path d="M8 8h14v4H8z" fill="#565656"/></svg>
              <div class="ml-1 flex h-5 w-20 items-center justify-between border-b border-[#7a7a7a] pr-1 pl-[5px]"><span>1 pt</span><svg class="h-2 w-2 text-[#b5b5b5]"><use href="#chev"/></svg></div>
              <div class="ml-1 flex h-5 w-[42px] items-center border border-[#616161] bg-[#4c4c4c] pl-[3px]"><i class="h-0.5 w-[22px] bg-[#e6e6e6]"></i><svg class="ml-1 h-2 w-2 text-[#b5b5b5]"><use href="#chev"/></svg></div>
            </div>
            <div class="mt-[5px] flex h-[21px] pl-2 text-[#cfcfcf]">
              <div class="flex w-[62px] items-center justify-between border border-[#616161] bg-[#4c4c4c] pr-0.5 pl-2"><svg class="h-3 w-3" viewBox="0 0 12 12"><path d="M1.500 1.500h9v9h-9z" fill="none" stroke="#161616"/><path d="M3.500 3.500h5v5h-5z" fill="none" stroke="#e6e6e6" stroke-width="1.800"/><path d="M0 0h3v3H0zM9 0h3v3H9zM0 9h3v3H0zM9 9h3v3H9z" fill="#161616"/></svg><svg class="h-2 w-2 text-[#b5b5b5]"><use href="#chev"/></svg></div>
              <div class="ml-[5px] flex w-[65px] items-center justify-between border border-[#616161] bg-[#4c4c4c] pr-0.5 pl-[9px]"><svg class="h-3 w-3" viewBox="0 0 12 12"><path d="M3 0h7v12H3V8.500H2v-5h1z" fill="#d8d8d8"/><path d="M2 6h8" stroke="#161616" stroke-width="1.200"/><path d="M0 4h4v4H0z" fill="#161616"/></svg><svg class="h-2 w-2 text-[#b5b5b5]"><use href="#chev"/></svg></div>
              <div class="ml-[5px] flex w-[51px] items-center justify-between border border-[#616161] bg-[#4c4c4c] pr-0.5 pl-2"><svg class="h-[13px] w-[13px]" viewBox="0 0 12 12"><path d="M0 0h12v9H9v3H0z" fill="#d8d8d8"/><path d="M5 12V5.500h7" fill="none" stroke="#161616" stroke-width="1.200"/><path d="M3.500 4h4v4h-4z" fill="#161616"/></svg><svg class="h-2 w-2 text-[#b5b5b5]"><use href="#chev"/></svg></div>
            </div>
            <div class="mt-1 border-t border-[#4c4c4c] pt-[3px] pl-[27px]"><div class="flex h-[20px] w-[174px] items-center border-b border-[#727272] pl-1">2px2px2px2px</div></div>
            <div class="mt-[3px] flex h-[19px] items-center pl-2.5 text-[#cfcfcf]">
              <svg class="h-3.5 w-3.5"><use href="#corner"/></svg><span class="ml-1.5 h-[19px] w-[71px] border-b border-[#727272] pl-1 leading-[18px]">2 px</span>
              <span class="ml-1 h-[19px] w-[71px] border-b border-[#727272] pl-1 leading-[18px]">2 px</span><svg class="ml-2 h-3.5 w-3.5 -scale-x-100"><use href="#corner"/></svg>
            </div>
            <div class="mt-[6px] ml-[91px] flex h-[25px] w-[25px] items-center justify-center bg-[#424242] text-[#c4c4c4]"><svg class="h-4 w-4"><use href="#link"/></svg></div>
            <div class="mt-[5px] flex h-[19px] items-center pl-2.5 text-[#cfcfcf]">
              <svg class="h-3.5 w-3.5 -scale-y-100"><use href="#corner"/></svg><span class="ml-1.5 h-[19px] w-[71px] border-b border-[#727272] pl-1 leading-[18px]">2 px</span>
              <span class="ml-1 h-[19px] w-[71px] border-b border-[#727272] pl-1 leading-[18px]">2 px</span><svg class="ml-2 h-3.5 w-3.5 -scale-100"><use href="#corner"/></svg>
            </div>
            <div class="mt-1 ml-2.5 border-t border-[#4a4a4a] pt-[7px] pl-[27px]">
              <div class="flex h-6 w-[133px] border border-[#636363] text-[#dedede]">
                <div class="flex w-[33px] items-center justify-center bg-[#424242]"><svg class="h-3.5 w-3.5" viewBox="0 0 14 14"><path d="M0 0h9v4h5v10H5V9H0z" fill="currentColor"/></svg></div>
                <div class="flex w-[33px] items-center justify-center border-r border-[#636363]"><svg class="h-3 w-3" viewBox="0 0 14 14"><path d="M0 0h9v4H4v5H0z" fill="currentColor"/><path d="M5.500 5.500h7.800v7.800H5.500z" fill="#444" stroke="currentColor" stroke-width="1.300"/></svg></div>
                <div class="flex w-[33px] items-center justify-center border-r border-[#636363]"><svg class="h-3.5 w-3.5" viewBox="0 0 14 14"><path d="M.6.6h8.800v8.800H.6zM4.600 4.600h8.800v8.800H4.600z" fill="none" stroke="currentColor" stroke-width="1.200"/><path d="M5 5h4.500v4.500H5z" fill="currentColor"/></svg></div>
                <div class="flex w-[33px] items-center justify-center"><svg class="h-3.5 w-3.5" viewBox="0 0 14 14"><path d="M0 0h9v4h5v10H5V9H0zM5 5v4h4V5z" fill="currentColor" fill-rule="evenodd"/></svg></div>
              </div>
            </div>
          </div>
          <div class="mb-[26px] w-4 bg-[#505050]"></div>
        </div>
        <div class="flex h-[7px] justify-center border-t border-[#404040] pt-px"><i class="h-[3px] w-4 bg-[#484848]"></i></div>
      </section>

      <!-- text cursor -->
      <svg class="absolute top-[471px] left-[1414px] h-[18px] w-[9px]" viewBox="0 0 9 18"><path d="M1 .5h7M1 17.500h7M4.500 1v16" stroke="#151515" stroke-width="1.200"/></svg>
      <div class="absolute -top-[27px] left-[1436px] h-[54px] w-[54px] rounded-full bg-[radial-gradient(circle,#b9b9a2_25%,#b3b16e_60%,#aeac3c_100%)]"></div>
      <span class="absolute top-[1044px] left-[1835px] text-[23px] leading-none tracking-tight text-white/25">udemy</span>
    </div>

    <script>
      // toolbar, every tool is a 26px row
      const tools = ["move", "artboard", "marquee", "lasso", "wand", "crop", "brush", "heal", "eraser", "bucket", "type", "pen", "select", "rrect", "dropper", "hand", "zoom", "dots"];
      const flyout = ["marquee", "lasso", "wand", "crop", "brush", "heal", "bucket", "type", "pen", "select", "rrect", "dropper", "dots"];
      document.getElementById("tools").innerHTML = tools
        .map((name) => {
          const box = name === "move" ? "bg-[#424242]" : "";
          const arrow = flyout.includes(name)
            ? '<i class="absolute right-0 bottom-1 border-l-[3px] border-b-[3px] border-l-transparent border-b-[#b0b0b0]"></i>'
            : "";
          return `<div class="relative mt-px ml-[5px] flex h-[25px] w-7 items-center justify-center ${box}"><svg class="h-[18px] w-[18px]"><use href="#${name}"/></svg>${arrow}</div>`;
        })
        .join("");

      // collapsed dock groups
      const dock = [["history", "info", "play"], ["brushes", "bset"], ["slashes"], ["cube", "news"], ["flag", "char", "para"], ["drop"], ["train"], ["lego", "lego", "grid"], ["person"], ["panels"], ["hat"]];
      document.getElementById("dock").innerHTML = dock
        .map((group) => {
          const icons = group
            .map((name) => {
              if (name === "char") return '<div class="flex h-7 items-center justify-center pl-px text-[17px] leading-none">A<i class="ml-px h-4 w-px bg-[#cfcfcf]"></i></div>';
              const box = name === "cube" ? "bg-[#3c3c3c] rounded-xs" : "";
              return `<div class="flex h-7 items-center justify-center pl-px"><div class="flex h-[23px] w-[27px] items-center justify-center ${box}"><svg class="h-[18px] w-[18px]"><use href="#${name}"/></svg></div></div>`;
            })
            .join("");
          return `<div class="border-t border-[#404040] pb-1"><div class="flex h-2 items-end justify-center"><i class="h-1 w-4 bg-[repeating-linear-gradient(90deg,#484848_0_1px,#565656_1px_2px)]"></i></div>${icons}</div>`;
        })
        .join("");

      // rulers, one segment per 50px
      let h = '<div class="h-[19px] w-[18px] shrink-0"></div>';
      for (let v = -500; v <= 1000; v += 50) {
        // the last label is cut by the window edge
        const label = v === 1000 ? "10" : Math.abs(v);
        const width = v === 1000 ? "w-[19px]" : "w-[50px]";
        h += `<div class="h-[19px] ${width} shrink-0 border-l border-[#6d6d6d] bg-[repeating-linear-gradient(90deg,transparent_0_4px,#6d6d6d_4px_5px)] bg-[length:100%_4px] bg-bottom bg-no-repeat pl-[3px]">${label}</div>`;
      }
      document.getElementById("hruler").innerHTML = h;
      const stack = (t) => t.split("").map((d) => `<div>${d}</div>`).join("");
      const tickCol = "border-r border-[#6d6d6d] bg-[repeating-linear-gradient(180deg,transparent_0_4px,#6d6d6d_4px_5px)] bg-[length:4px_100%] bg-right bg-no-repeat pt-0.5 pl-[3px]";
      let s = `<div class="h-[26px] ${tickCol}">0</div>`;
      for (let v = -250; v <= 600; v += 50) {
        s += `<div class="h-[50px] border-t ${tickCol}">${stack(String(Math.abs(v)))}</div>`;
      }
      s += `<div class="h-[26px] border-t ${tickCol}">${stack("65")}</div>`;
      document.getElementById("vruler").innerHTML = s;

      const recent = ["#101010", "#ebebeb", "#ebebeb", "#101010", "#d5d1cd", "#dbdddf", "#6893b5", "#ebebeb", "#58b5d9", "#58b5d9", "#ebebeb", "#9b8f8b", "#7b7b7b", "#63783a", "#d0d0d0"];
      document.getElementById("recent").innerHTML = recent.map((c) => `<i class="h-[15px] w-[15px]" style="background:${c}"></i>`).join("");
      const swatches = [
        "#dadddf", "#d7d7d7", "#d1d1d1", "#a2a4a8", "#2a323d", "#4397cb", "#b0b4ba", "#4bade0",
        "#3e3f41", "#282a32", "#1a8bd0", "#58b6d9", "#22282c", "#e6d777", "#7aa7b4", "#3d5168",
        "#416894", "#dadde1", "#63793a", "#5696c0", "#b8413c", "#aab4bd", "#3b3665", "#45494f",
        "#3c3b67", "#382a3b", "#2dbea5", "#aa9c6d", "#df973f", "#dc8c2a", "#7c7c7c", "#3a4751",
        "#df9e54", "#329bdb", "#64686c", "#9b8f8b", "#3d302e", "#d6c338", "#e4ca34", "#e2ca2d",
        "#e8dc94", "#82b6ea", "#352f78", "#3d377a", "#dcd27d", "#3cb3a3", "#4297cd", "#e6e6e0",
        "#e1e0da", "#82a5ca", "#68a9b4", "#606169", "#c1b6b4", "#86a3d5", "#5d7896",
      ];
      document.getElementById("swatches").innerHTML = swatches.map((c) => `<i class="h-[29px] w-[29px]" style="background:${c}"></i>`).join("");
    </script>
  </body>
</html>
